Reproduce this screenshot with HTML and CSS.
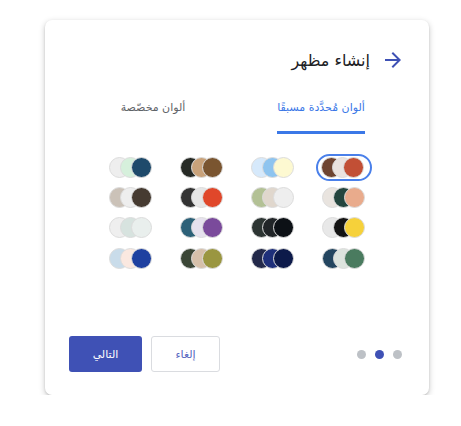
FILE: index.html
```html
<!DOCTYPE html>
<html lang="ar" dir="rtl">
<head>
<meta charset="utf-8">
<link rel="stylesheet" href="styles.css">
</head>
<body>
<div class="card">
  <div class="header">
    <svg class="back" viewBox="0 0 24 24" width="24" height="24"><path d="M12 4l-1.41 1.41L16.17 11H4v2h12.17l-5.58 5.59L12 20l8-8z" fill="#3f51b5"/></svg>
    <h1 class="title">إنشاء مظهر</h1>
  </div>
  <div class="tabs">
    <div class="tab"><span class="tab-label active">ألوان مُحدَّدة مسبقًا</span></div>
    <div class="tab"><span class="tab-label">ألوان مخصّصة</span></div>
  </div>
  <div class="grid">
    <div class="cell"><div class="swatch selected"><i style="background:#6e4431"></i><i style="background:#ebe3df"></i><i style="background:#c24f35"></i></div></div>
    <div class="cell"><div class="swatch"><i style="background:#d6e9fb"></i><i style="background:#8ec4ef"></i><i style="background:#fdf9d1"></i></div></div>
    <div class="cell"><div class="swatch"><i style="background:#262a25"></i><i style="background:#c9a27a"></i><i style="background:#7a5530"></i></div></div>
    <div class="cell"><div class="swatch"><i style="background:#eeeeee"></i><i style="background:#d6f0dc"></i><i style="background:#1e4a6b"></i></div></div>

    <div class="cell"><div class="swatch"><i style="background:#e9e4df"></i><i style="background:#24453e"></i><i style="background:#e9ab8c"></i></div></div>
    <div class="cell"><div class="swatch"><i style="background:#b3c195"></i><i style="background:#e0d7cd"></i><i style="background:#eeeeee"></i></div></div>
    <div class="cell"><div class="swatch"><i style="background:#333333"></i><i style="background:#e6e6e6"></i><i style="background:#e0472a"></i></div></div>
    <div class="cell"><div class="swatch"><i style="background:#cbc2b8"></i><i style="background:#eeeeee"></i><i style="background:#463b31"></i></div></div>

    <div class="cell"><div class="swatch"><i style="background:#e8e8e8"></i><i style="background:#141414"></i><i style="background:#f6d13a"></i></div></div>
    <div class="cell"><div class="swatch"><i style="background:#2d3533"></i><i style="background:#212528"></i><i style="background:#0d1116"></i></div></div>
    <div class="cell"><div class="swatch"><i style="background:#2d6178"></i><i style="background:#e6e1ee"></i><i style="background:#7a4a9b"></i></div></div>
    <div class="cell"><div class="swatch"><i style="background:#efefef"></i><i style="background:#d7e3df"></i><i style="background:#e9efed"></i></div></div>

    <div class="cell"><div class="swatch"><i style="background:#244660"></i><i style="background:#dde4de"></i><i style="background:#4a7b5f"></i></div></div>
    <div class="cell"><div class="swatch"><i style="background:#23294a"></i><i style="background:#1e2f7a"></i><i style="background:#0d1a4a"></i></div></div>
    <div class="cell"><div class="swatch"><i style="background:#3b4636"></i><i style="background:#d6c0aa"></i><i style="background:#9a9640"></i></div></div>
    <div class="cell"><div class="swatch"><i style="background:#c9dcea"></i><i style="background:#fae8e0"></i><i style="background:#1e40a0"></i></div></div>
  </div>
  <div class="footer">
    <div class="dots"><span class="dot"></span><span class="dot active"></span><span class="dot"></span></div>
    <div class="buttons">
      <button class="btn btn-outline">إلغاء</button>
      <button class="btn btn-primary">التالي</button>
    </div>
  </div>
</div>
</body>
</html>
```
FILE: styles.css
```css
* { box-sizing: border-box; }
html, body { margin: 0; padding: 0; background: #ffffff; }
body {
  font-family: "DejaVu Sans", "Noto Sans", sans-serif;
  padding: 20px 32px 0 45px;
}
.card {
  width: 384px;
  height: 375px;
  background: #fff;
  border-radius: 7px;
  box-shadow: 0 2px 6px rgba(0,0,0,0.22), 0 1px 2px rgba(0,0,0,0.12);
  padding: 20px 24px 23px 24px;
  display: flex;
  flex-direction: column;
}
.header {
  height: 40px;
  display: flex;
  align-items: center;
  gap: 11px;
}
.back { display: block; flex: none; }
.title {
  margin: 0;
  font-size: 16px;
  font-weight: normal;
  color: #202124;
}
.tabs {
  display: grid;
  grid-template-columns: 1fr 1fr;
}
.tab {
  display: flex;
  justify-content: center;
  padding-top: 18px;
}
.tab-label {
  display: inline-block;
  font-size: 11px;
  line-height: 20px;
  color: #5f6368;
  padding: 0 0 13px;
  border-bottom: 3px solid transparent;
}
.tab-label.active {
  color: #3b78e7;
  border-bottom-color: #3b78e7;
}
.grid {
  margin-top: 18px;
  align-self: center;
  display: grid;
  grid-template-columns: repeat(4, 71px);
  grid-auto-rows: 30.3px;
}
.cell {
  display: flex;
  align-items: center;
  justify-content: center;
}
.swatch {
  direction: ltr;
  display: flex;
  padding: 2px;
  border: 2px solid transparent;
  border-radius: 14px;
}
.swatch.selected {
  border-color: #4a80ea;
  padding: 1px 6px 1px 3px;
}
.swatch i {
  display: block;
  width: 21px;
  height: 21px;
  border-radius: 50%;
  border: 1px solid #dcdcdc;
}
.swatch i + i { margin-left: -10px; }
.footer {
  margin-top: auto;
  display: flex;
  justify-content: space-between;
  align-items: center;
}
.dots {
  display: flex;
  gap: 9px;
  padding-right: 3px;
}
.dot {
  width: 9px;
  height: 9px;
  border-radius: 50%;
  background: #bdc1c6;
}
.dot.active { background: #3f51b5; }
.buttons {
  display: flex;
  gap: 9px;
}
.btn {
  height: 36px;
  border-radius: 3px;
  font-family: "DejaVu Sans", sans-serif;
  font-size: 11px;
  cursor: pointer;
}
.btn-outline {
  width: 69px;
  background: #fff;
  color: #5565c0;
  border: 1px solid #dadce0;
}
.btn-primary {
  width: 73px;
  background: #3f51b5;
  color: #fff;
  border: none;
}
```
